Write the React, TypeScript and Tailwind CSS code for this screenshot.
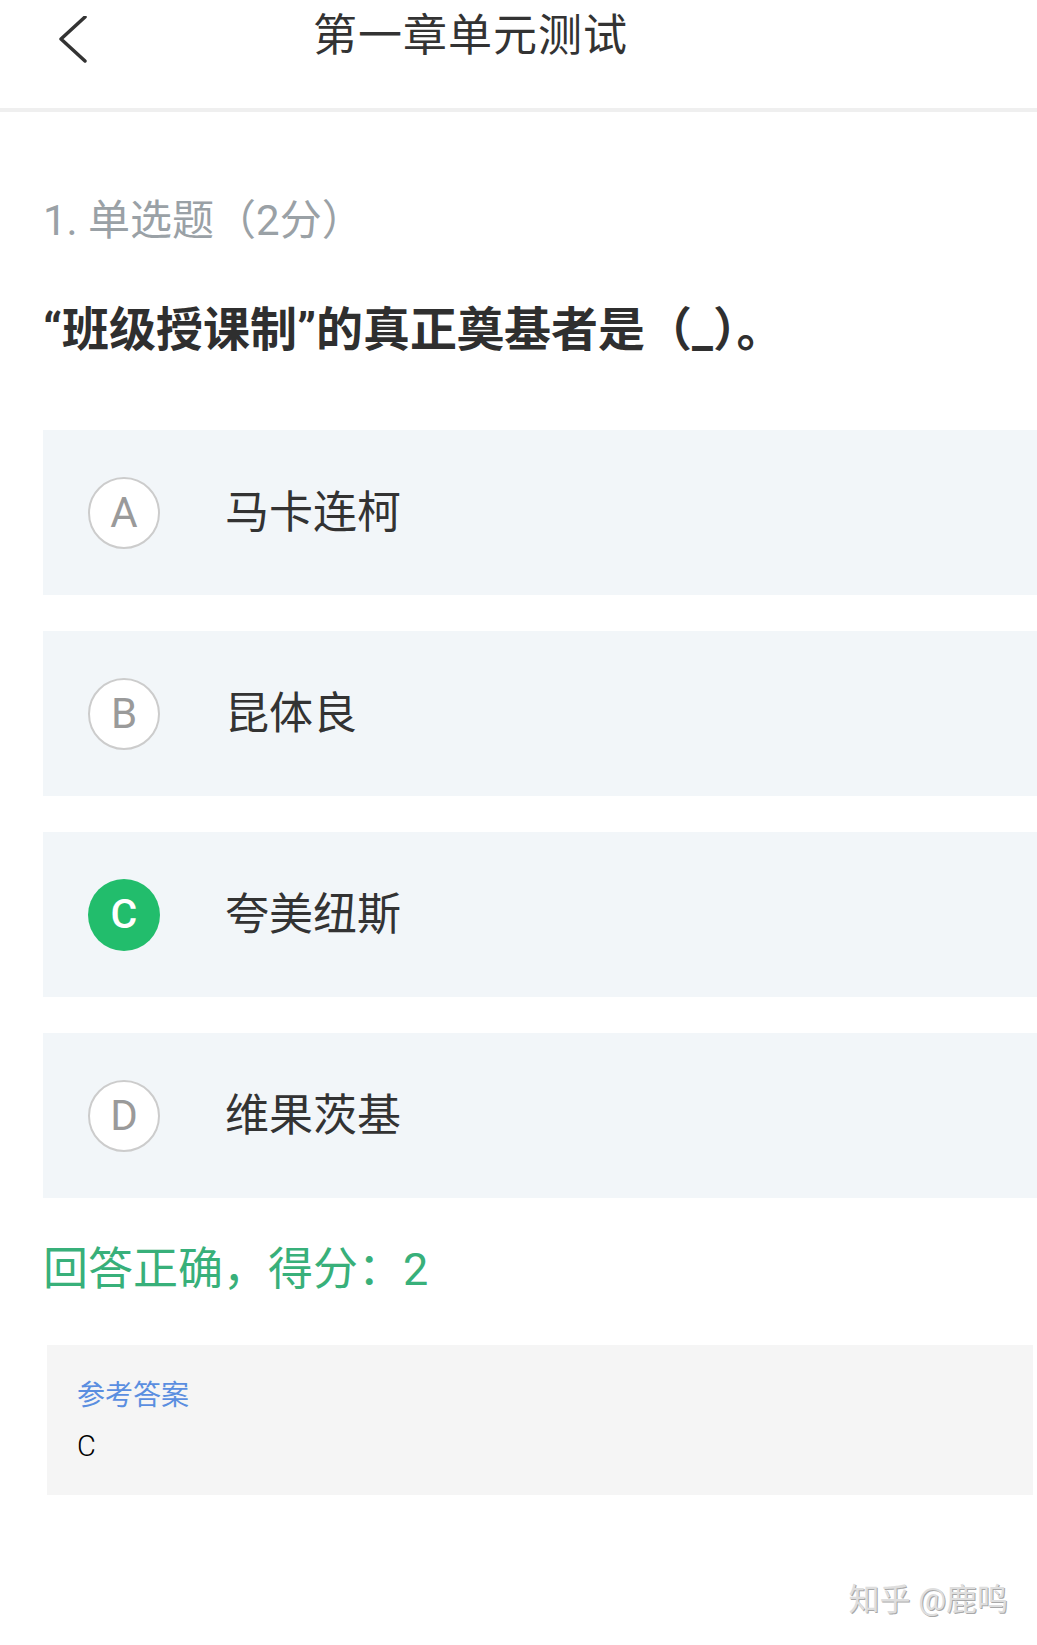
import React from "react";

type Option = { key: string; text: string; picked?: boolean };

const options: Option[] = [
    { key: "A", text: "马卡连柯" },
    { key: "B", text: "昆体良" },
    { key: "C", text: "夸美纽斯", picked: true },
    { key: "D", text: "维果茨基" },
];

const App: React.FC = () => {
    return (
        <div className="w-full min-h-[1645px] bg-white font-['Roboto','Noto_Sans_CJK_SC',sans-serif] text-[#333333]">
            {/* Top bar */}
            <header className="h-[108px] flex items-start pt-[14px] pl-[58px]">
                <svg className="w-[30px] h-[50px] mt-[2px]" viewBox="0 0 30 50" fill="none">
                    <polyline points="27,1 3,23 27,45" stroke="#333333" strokeWidth="3.5" strokeLinecap="round" strokeLinejoin="round" />
                </svg>
                <h1 className="ml-[225px] text-[44px] leading-none font-normal tracking-[1px] text-[#333333]">
                    第一章单元测试
                </h1>
            </header>
            <div className="h-[4px] bg-[#efefef]" />

            <main className="pl-[43px] flex flex-col">
                <p className="mt-[88px] text-[42px] leading-none text-[#9aa1a6]">1. 单选题（2分）</p>
                <h2 className="mt-[64px] text-[47px] leading-none font-bold text-[#2f2f2f]">
                    “班级授课制”的真正奠基者是（_）。
                </h2>

                {/* Choices */}
                <div className="mt-[77px] flex flex-col gap-[36px]">
                    {options.map((o) => (
                        <div key={o.key} className="h-[165px] bg-[#f2f6f9] flex items-center pl-[45px]">
                            {o.picked ? (
                                <div className="w-[72px] h-[72px] rounded-full bg-[#22bd6c] flex items-center justify-center text-white text-[41px] font-medium leading-none">
                                    {o.key}
                                </div>
                            ) : (
                                <div className="w-[72px] h-[72px] rounded-full bg-white border-[2.5px] border-[#cccccc] flex items-center justify-center text-[#9a9a9a] text-[42px] leading-none">
                                    {o.key}
                                </div>
                            )}
                            <span className="ml-[65px] text-[44px] leading-none text-[#333333]">{o.text}</span>
                        </div>
                    ))}
                </div>

                <p className="mt-[49px] text-[45px] leading-none text-[#38b07a]">回答正确，得分：2</p>

                {/* Reference answer */}
                <div className="mt-[53px] ml-[4px] mr-[4px] h-[150px] bg-[#f5f5f5] pl-[30px] pt-[37px] flex flex-col">
                    <span className="text-[28px] leading-none text-[#5a8ee0]">参考答案</span>
                    <span className="mt-[22px] text-[29px] leading-none font-light text-black">C</span>
                </div>

                <div className="mt-[89px] flex justify-end pr-[29px]">
                    <span className="text-[31px] leading-none text-[#dedede] [text-shadow:1px_1px_0_#a8a8a8]">知乎 @鹿鸣</span>
                </div>
            </main>
        </div>
    );
};

export default App;
